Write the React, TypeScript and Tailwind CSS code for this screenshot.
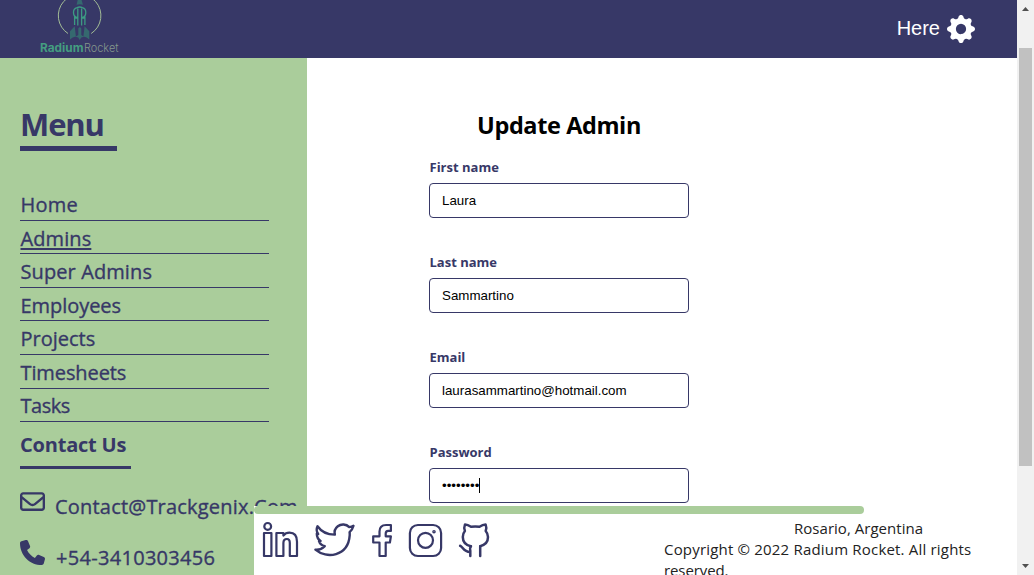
import React from "react";
import { BsGearFill } from "react-icons/bs";
import { FaPhone, FaRegEnvelope } from "react-icons/fa6";

const menu = [
  { label: "Home", css: "tracking-[0.2px]", row: "h-[34px] leading-[31px]" },
  { label: "Admins", css: "tracking-[0.1px] underline underline-offset-[2px] decoration-2", row: "h-[33px] leading-[29px]" },
  { label: "Super Admins", css: "tracking-[0.1px]", row: "h-[34px] leading-[31px]" },
  { label: "Employees", css: "tracking-[-0.05px]", row: "h-[33px] leading-[29px]" },
  { label: "Projects", css: "tracking-[0px]", row: "h-[34px] leading-[31px]" },
  { label: "Timesheets", css: "tracking-[-0.1px]", row: "h-[34px] leading-[31px]" },
  { label: "Tasks", css: "tracking-[-0.5px]", row: "h-[33px] leading-[31px]" },
];

const fields = [
  { label: "First name", value: "Laura" },
  { label: "Last name", value: "Sammartino" },
  { label: "Email", value: "laurasammartino@hotmail.com" },
];

function Logo() {
  return (
    <svg className="ml-[38px] block h-[58px] w-[84px]" viewBox="38 0 84 58">
      <path d="M68 33.5A21.3 21.3 0 1 1 91.2 33.5" fill="none" stroke="#a3bd96" strokeWidth="1" />
      <path d="M76.6 4.8L77.7 0h3.9l1.3 4.8q-3.1-1-6.3 0z" fill="#35696f" />
      <path d="M74.6 25v-9.5M84.9 25v-9.5M77.8 25.5v-17M81.6 25.5v-17M77.7 18h-3.1M81.7 18h3.2M77.5 17.5C72.5 17 72 9 77 7.6q2.7-1.2 5.5 0C87.2 9 86.7 17 82 17.5" fill="none" stroke="#3d9a83" strokeWidth="1.3" />
      <path d="M70 39.5v-8.2l4.7-5 1.2 10.2q-3.5.5-5.9 3zM89.3 39.5v-8.2l-4.7-5-1.2 10.2q3.5.5 5.9 3zM75.5 36.8l2.8-1.8v-6.5q1.5-2.5 3 0V35l2.5 1.8-2.5.8-1.6 2.4-1.5-2.4z" fill="#35696f" />
      <text x="40" y="52" fontFamily="Inter, sans-serif" fontSize="11.5" fontWeight="700" fill="#449d80" textLength="43.5" lengthAdjust="spacingAndGlyphs">Radium</text>
      <text x="84" y="52" fontFamily="Inter, sans-serif" fontSize="11.5" fontWeight="300" fill="#84978c" textLength="34.5" lengthAdjust="spacingAndGlyphs">Rocket</text>
    </svg>
  );
}

function Socials() {
  return (
    <svg className="block h-[44px] w-[244px]" viewBox="254 518 244 44" fill="none" stroke="#373867" strokeWidth="2.2" strokeLinejoin="round" strokeLinecap="round">
      <g>
        <circle cx="267.7" cy="526.4" r="3.4" />
        <path d="M264 533h7.4v23H264z" />
        <path d="M276.4 533h7v2.6c1.5-1.9 3.5-2.9 6.1-2.9 4.9 0 7.5 3.3 7.5 9V556h-7.2v-13c0-2.7-.9-4-2.9-4-2.2 0-3.5 1.4-3.5 4v13h-7z" />
      </g>
      <path d="M353.5 525.8c-1.3.9-2.7 1.2-4.2 1.3-3.2-3.3-8.2-3.5-11.5-.8-2.7 2.2-3.8 5.1-2.9 8.3-7.4.1-13.4-2.8-17.4-8.4-1.3 2.8-1 5.6.7 7.8l-1.4-.3c0 3.2 1.3 5.6 3.8 7.2l-1.6.2c.9 2.8 2.8 4.4 5.8 5-2.8 2.9-6 4-9.4 3.6 10.9 9.4 32.7 7 34.3-14.3.1-1.2 0-2.3-.1-3.2 1.9-1.6 3.2-3.8 3.9-6.4z" strokeWidth="2.4" />
      <path d="M390.9 525h-4.8c-4.5 0-6.6 2.6-6.6 6.6v4.7h-6.3v6.2h6.3V556h6.2v-13.5h4.2l1-6.2h-5.2v-2.7c0-1.9.7-2.7 2.5-2.7h2.7z" />
      <g>
        <rect x="409.9" y="525" width="31.2" height="31" rx="8" />
        <circle cx="425.5" cy="540.3" r="7.5" />
        <circle cx="434" cy="531.7" r=".7" />
      </g>
      <g>
        <path d="M470.8 546.2c-4.8-1.1-8-4-8-9.2 0-2.6.6-4.3 2.1-6-.9-2.2-.7-4.6.1-6.6 2.5.1 4.4 1.3 6 2.4 2.8-.5 5.7-.5 8.5 0 1.7-1.2 3.5-2.3 6.1-2.4.8 2 .9 4.4.1 6.6 1.5 1.7 2.3 3.7 2.3 6.1 0 5-3.1 8-7.8 9.1" strokeWidth="2.5" />
        <path d="M480.2 546.2V556M471 546.3c-1 1.2-1.2 3-.7 4.3v5.4M460.1 545.8c2.9.9 3.3 6.4 10.2 6.2" strokeWidth="2.5" />
      </g>
    </svg>
  );
}

export default function App() {
  return (
    <div className="flex h-[575px] w-[1034px] overflow-hidden bg-white font-['Open_Sans',sans-serif]">
      <div className="relative flex h-full w-[1017px] flex-col overflow-hidden">
        <header className="flex h-[58px] shrink-0 items-center justify-between bg-[#373867]">
          <Logo />
          <div className="flex items-center gap-[7px] pr-[42px] pb-[2px] font-['Liberation_Sans',sans-serif] text-[20px] text-white">
            <span>Here</span>
            <BsGearFill className="mt-px size-7" />
          </div>
        </header>
        <div className="flex h-[517px]">
          <aside className="flex w-[307px] shrink-0 flex-col bg-[#aacd9b] px-5 text-[#373867]">
            <h1 className="mt-[45px] h-[48px] w-[97px] shrink-0 border-b-[5px] border-[#373867] text-[31px] leading-[43px] font-bold tracking-[-1.1px]">Menu</h1>
            <nav className="mt-9 flex w-[249px] shrink-0 flex-col">
              {menu.map((m) => (
                <a key={m.label} className={`flex items-end border-b border-[#373867] pl-[0.5px] text-[20px] whitespace-nowrap [-webkit-text-stroke:0.35px_#373867] ${m.row}`}>
                  <span className={m.css}>{m.label}</span>
                </a>
              ))}
            </nav>
            <h2 className="mt-[7px] h-[40px] w-[111px] shrink-0 border-b-[3px] border-[#373867] text-[20px] leading-[31px] font-bold whitespace-nowrap tracking-[-0.2px]">Contact Us</h2>
            <div className="mt-[18px] flex h-[40px] shrink-0 gap-[10px] text-[20px] leading-[40px] whitespace-nowrap [-webkit-text-stroke:0.35px_#373867]">
              <FaRegEnvelope className="mt-[2px] size-[25px] shrink-0" />
              <span className="tracking-[0.2px]">Contact@Trackgenix.Com</span>
            </div>
            <div className="mt-[11px] flex h-[37px] shrink-0 gap-[11px] text-[20px] leading-[39px] whitespace-nowrap [-webkit-text-stroke:0.35px_#373867]">
              <FaPhone className="mt-[2px] size-[25px] shrink-0" />
              <span className="tracking-[0.3px]">+54-3410303456</span>
            </div>
          </aside>
          <main className="flex flex-1 flex-col pl-[122px]">
            <h2 className="mt-[49px] h-[37px] w-[260px] text-center text-[23.5px] leading-9 font-bold whitespace-nowrap tracking-[-0.4px]">Update Admin</h2>
            <form className="mt-[13px] flex w-[260px] flex-col gap-[34px]">
              {fields.map((f) => (
                <label key={f.label} className="flex h-[61px] flex-col">
                  <span className="h-[26px] pl-[0.5px] text-[13px] leading-5 font-bold text-[#373867]">{f.label}</span>
                  <span className="flex h-[35px] items-center rounded border border-[#373867] pl-3 font-['Liberation_Sans',sans-serif] text-[13.333px] text-black">{f.value}</span>
                </label>
              ))}
              <label className="flex h-[61px] flex-col">
                <span className="h-[26px] pl-[0.5px] text-[13px] leading-5 font-bold text-[#373867]">Password</span>
                <span className="flex h-[35px] items-center rounded border border-[#373867] pl-3 font-['Liberation_Sans',sans-serif] text-[13.333px] text-black">
                  <span>••••••••</span>
                  <span className="h-[15px] w-px bg-black" />
                </span>
              </label>
            </form>
          </main>
        </div>
        <footer className="absolute top-[506px] left-[254px] h-[69px] w-[763px] bg-white">
          <div className="h-2 w-[610px] rounded bg-[#aacd9b]" />
          <div className="flex">
            <div className="pt-1"><Socials /></div>
            <div className="ml-[166px] w-[340px] pt-[4px] text-[15px] leading-[21px] text-[#222]">
              <p className="pl-[130px] whitespace-nowrap tracking-[0.03px]">Rosario, Argentina</p>
              <p className="whitespace-nowrap tracking-[0.19px]">Copyright © 2022 Radium Rocket. All rights</p>
              <p className="whitespace-nowrap tracking-[-0.1px]">reserved.</p>
            </div>
          </div>
        </footer>
      </div>
      <div className="flex w-[17px] flex-col items-center bg-[#f1f1f1]">
        <svg className="h-12 w-[17px]" viewBox="0 0 17 48"><path d="M5 11l3.5-4 3.5 4z" fill="#505050" /></svg>
        <div className="ml-[-1px] h-[418px] w-[13px] bg-[#c1c1c1]" />
        <svg className="mt-auto h-[17px] w-[17px]" viewBox="0 0 17 17"><path d="M5 6l3.5 4L12 6z" fill="#505050" /></svg>
      </div>
    </div>
  );
}
